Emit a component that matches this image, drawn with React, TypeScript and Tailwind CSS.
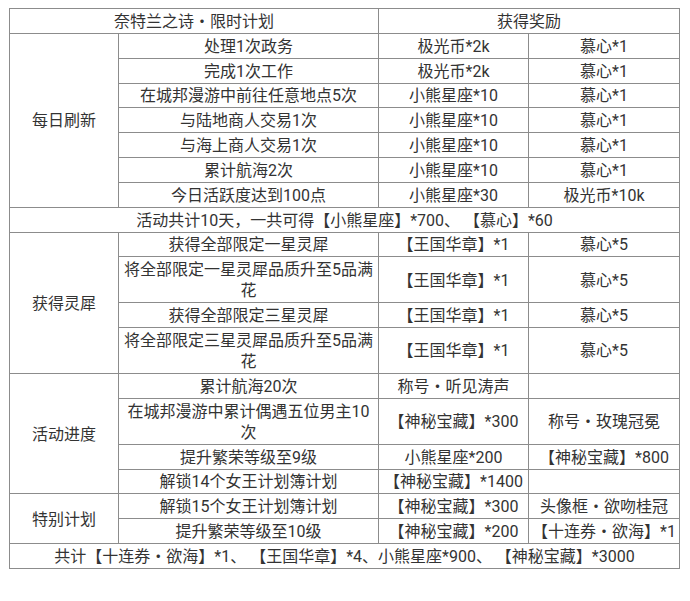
const FONT = "font-['Roboto','Noto_Sans_CJK_SC',sans-serif]";

type Row = { task: string; a: string; b: string };

const daily: Row[] = [
  { task: '处理1次政务', a: '极光币*2k', b: '慕心*1' },
  { task: '完成1次工作', a: '极光币*2k', b: '慕心*1' },
  { task: '在城邦漫游中前往任意地点5次', a: '小熊星座*10', b: '慕心*1' },
  { task: '与陆地商人交易1次', a: '小熊星座*10', b: '慕心*1' },
  { task: '与海上商人交易1次', a: '小熊星座*10', b: '慕心*1' },
  { task: '累计航海2次', a: '小熊星座*10', b: '慕心*1' },
  { task: '今日活跃度达到100点', a: '小熊星座*30', b: '极光币*10k' },
];

const lingxi: Row[] = [
  { task: '获得全部限定一星灵犀', a: '【王国华章】*1', b: '慕心*5' },
  { task: '将全部限定一星灵犀品质升至5品满花', a: '【王国华章】*1', b: '慕心*5' },
  { task: '获得全部限定三星灵犀', a: '【王国华章】*1', b: '慕心*5' },
  { task: '将全部限定三星灵犀品质升至5品满花', a: '【王国华章】*1', b: '慕心*5' },
];

const progress: Row[] = [
  { task: '累计航海20次', a: '称号・听见涛声', b: '' },
  { task: '在城邦漫游中累计偶遇五位男主10次', a: '【神秘宝藏】*300', b: '称号・玫瑰冠冕' },
  { task: '提升繁荣等级至9级', a: '小熊星座*200', b: '【神秘宝藏】*800' },
  { task: '解锁14个女王计划簿计划', a: '【神秘宝藏】*1400', b: '' },
];

const special: Row[] = [
  { task: '解锁15个女王计划簿计划', a: '【神秘宝藏】*300', b: '头像框・欲吻桂冠' },
  { task: '提升繁荣等级至10级', a: '【神秘宝藏】*200', b: '【十连券・欲海】*1' },
];

const cell = 'border border-[#8c8c8c] px-[2px] pt-[1.85px] pb-[1px] text-center align-middle';

function Group({ label, rows }: { label: string; rows: Row[] }) {
  return (
    <>
      {rows.map((r, i) => (
        <tr key={r.task}>
          {i === 0 && (
            <td rowSpan={rows.length} className={cell}>
              {label}
            </td>
          )}
          <td className={cell}>{r.task}</td>
          <td className={`${cell} whitespace-nowrap`}>{r.a}</td>
          <td className={`${cell} whitespace-nowrap`}>{r.b}</td>
        </tr>
      ))}
    </>
  );
}

export default function App() {
  return (
    <div className={`h-[601px] w-[690px] bg-white pl-[9px] pt-[8px] ${FONT}`}>
      <table className="w-[671px] table-fixed border-collapse text-[16px] leading-[21px] text-[#333]">
        <colgroup>
          <col className="w-[109px]" />
          <col className="w-[260px]" />
          <col className="w-[150px]" />
          <col className="w-[151px]" />
        </colgroup>
        <tbody>
          <tr>
            <td colSpan={2} className={cell}>
              奈特兰之诗・限时计划
            </td>
            <td colSpan={2} className={cell}>
              获得奖励
            </td>
          </tr>
          <Group label="每日刷新" rows={daily} />
          <tr>
            <td colSpan={4} className={cell}>
              活动共计10天，一共可得【小熊星座】*700、 【慕心】*60
            </td>
          </tr>
          <Group label="获得灵犀" rows={lingxi} />
          <Group label="活动进度" rows={progress} />
          <Group label="特别计划" rows={special} />
          <tr>
            <td colSpan={4} className={cell}>
              共计【十连券・欲海】*1、 【王国华章】*4、小熊星座*900、 【神秘宝藏】*3000
            </td>
          </tr>
        </tbody>
      </table>
    </div>
  );
}
